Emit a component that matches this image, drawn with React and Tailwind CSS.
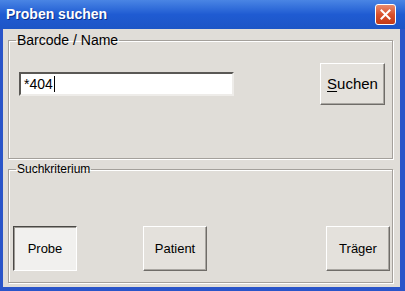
import React from 'react';

const raised =
  'bg-[#e4e1dc] border border-t-white border-l-white border-r-[#6f6c68] border-b-[#6f6c68] shadow-[inset_-1px_-1px_0_#a9a6a1]';
const pressed =
  'bg-[#f1f0ee] border border-t-[#4a4845] border-l-[#4a4845] border-r-white border-b-white shadow-[inset_1px_1px_0_#9c9994]';

const CloseButton = () => (
  <div className="w-[21px] h-[21px] rounded-[3px] border border-white bg-gradient-to-b from-[#e98a6c] via-[#d9502c] to-[#c33a16] flex items-center justify-center">
    <svg width="11" height="11" viewBox="0 0 11 11">
      <path d="M1.5 1.5 L9.5 9.5 M9.5 1.5 L1.5 9.5" stroke="white" strokeWidth="2" strokeLinecap="square" />
    </svg>
  </div>
);

const Group = ({ label, labelClass, className, children }) => (
  <fieldset
    className={`border border-[#a4a09b] shadow-[inset_1px_1px_0_white,1px_1px_0_white] ${className}`}
  >
    <legend className={`ml-[7px] px-[1px] text-black ${labelClass}`}>{label}</legend>
    {children}
  </fieldset>
);

const App = () => {
  return (
    <div className="w-[405px] h-[291px] flex flex-col bg-[#2a55c9] font-['Liberation_Sans',Arial,sans-serif] overflow-hidden">
      <div className="h-[29px] shrink-0 flex items-center justify-between pl-[6px] pr-[9px] bg-gradient-to-b from-[#4a85e4] via-[#1f5bd2] to-[#1c55c6]">
        <span className="text-white font-bold text-[14px] [text-shadow:1px_1px_0_#0c2f8a]">
          Proben suchen
        </span>
        <CloseButton />
      </div>
      <div className="flex-1 ml-[3px] mr-[5px] mb-[4px] bg-[#e0ddd8] flex flex-col pl-[5px] pr-[7px] pt-[3px]">
        <Group label="Barcode / Name" labelClass="text-[14px] leading-[16px]" className="h-[127px]">
          <div className="flex items-center justify-between pl-[10px] pr-[7px] pt-[15px]">
            <div className="w-[215px] h-[24px] bg-white border-2 border-t-[#5a5855] border-l-[#5a5855] border-r-[#eeece9] border-b-[#eeece9] flex items-center pl-[3px] text-[14px] text-black">
              <span>*404</span>
              <span className="w-[1px] h-[16px] bg-black ml-[1px]" />
            </div>
            <button className={`w-[65px] h-[42px] text-[15px] text-black ${raised}`}>
              <span className="underline underline-offset-2">S</span>uchen
            </button>
          </div>
        </Group>
        <Group label="Suchkriterium" labelClass="text-[12px] leading-[14px]" className="mt-[3px] h-[121px]">
          <div className="flex items-center pl-[4px] pr-[2px] pt-[50px]">
            <button className={`w-[64px] h-[45px] text-[13px] text-black ${pressed}`}>Probe</button>
            <button className={`ml-[66px] w-[64px] h-[45px] text-[13px] text-black ${raised}`}>Patient</button>
            <button className={`ml-auto w-[64px] h-[45px] text-[13px] text-black ${raised}`}>Träger</button>
          </div>
        </Group>
      </div>
    </div>
  );
};

export default App;
